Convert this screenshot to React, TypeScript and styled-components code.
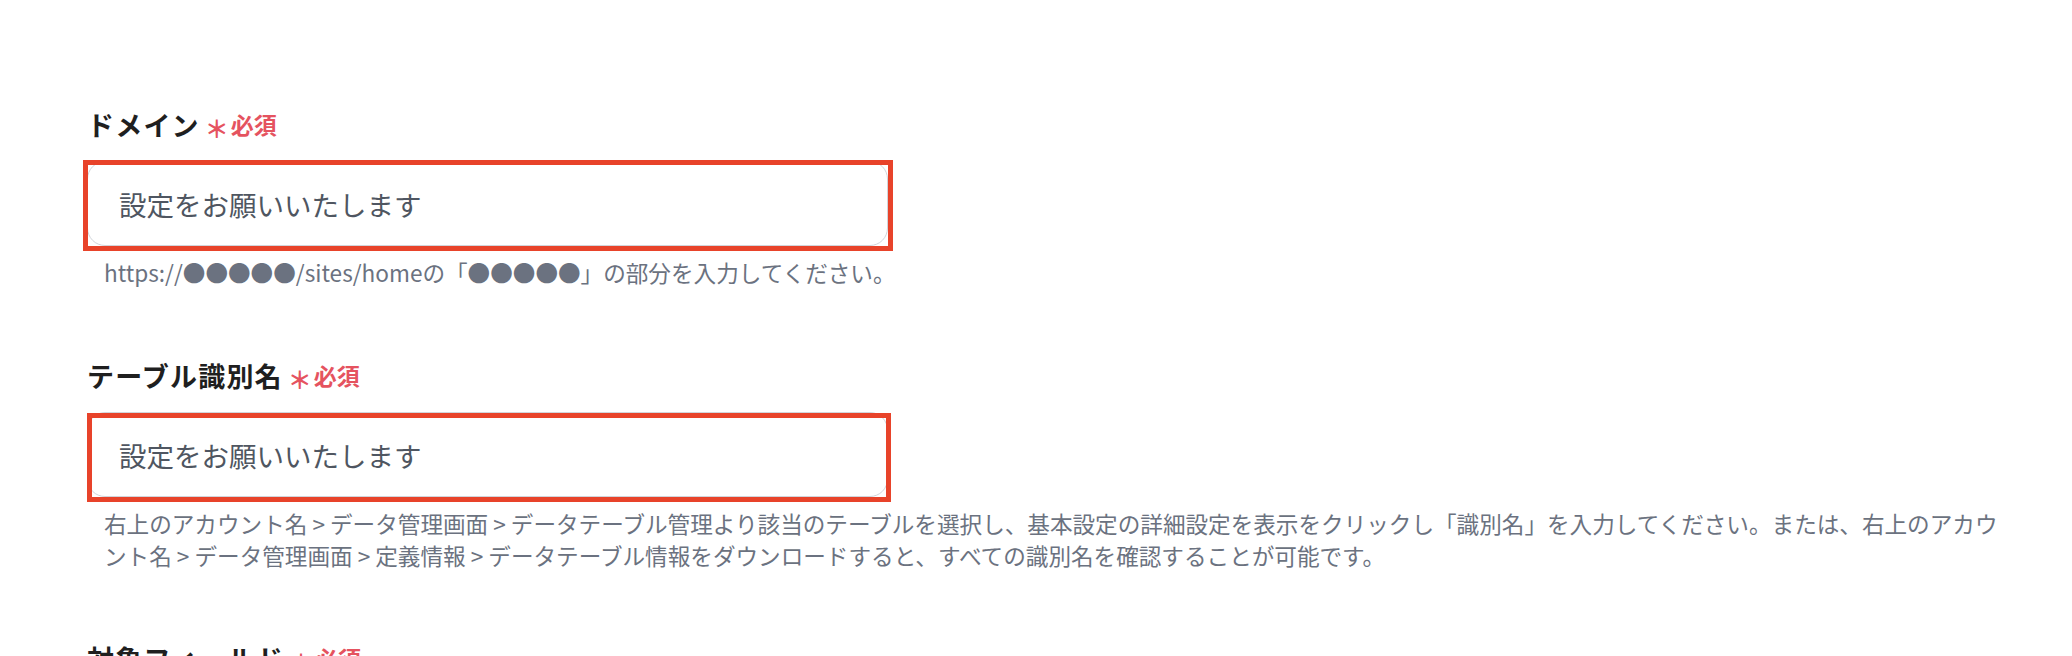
import styled, { createGlobalStyle } from "styled-components";

const GlobalStyle = createGlobalStyle`
  html, body {
    margin: 0;
    padding: 0;
    background: #ffffff;
  }
  body {
    font-family: "Noto Sans CJK JP", "Noto Sans", sans-serif;
    color: #1f1f1f;
  }
`;

interface IFrame {
  top: number;
  right: number;
  bottom: number;
  left: number;
}

interface IField {
  label: string;
  hint?: string;
  frame?: IFrame;
}

const fields: IField[] = [
  {
    label: "ドメイン",
    hint: "https://●●●●●/sites/homeの「●●●●●」の部分を入力してください。",
    frame: { top: -1, right: -5, bottom: -5, left: -4 },
  },
  {
    label: "テーブル識別名",
    hint:
      "右上のアカウント名 > データ管理画面 > データテーブル管理より該当のテーブルを選択し、基本設定の詳細設定を表示をクリックし「識別名」を入力してください。または、右上のアカウント名 > データ管理画面 > 定義情報 > データテーブル情報をダウンロードすると、すべての識別名を確認することが可能です。",
    frame: { top: 1, right: -3, bottom: -5, left: 0 },
  },
  {
    label: "対象フィールド",
  },
];

const FormField = ({ label, hint, frame }: IField) => {
  return (
    <Field>
      <Label>
        {label}
        <Star>＊</Star>
        <Required>必須</Required>
      </Label>
      <InputWrap>
        <Input type="text" placeholder="設定をお願いいたします" />
        {frame ? <Highlight {...frame} /> : null}
      </InputWrap>
      {hint ? <Hint>{hint}</Hint> : null}
    </Field>
  );
};

export default function App() {
  return (
    <>
      <GlobalStyle />
      <Page>
        {fields.map((f) => (
          <FormField key={f.label} {...f} />
        ))}
      </Page>
    </>
  );
}

const Page = styled.div`
  padding: 106px 72px 0 87px;
  display: flex;
  flex-direction: column;
`;

const Field = styled.div`
  display: flex;
  flex-direction: column;
  margin-bottom: 68px;
`;

const Label = styled.div`
  display: flex;
  align-items: center;
  height: 36px;
  font-size: 27px;
  font-weight: 700;
  color: #1f1f1f;
  letter-spacing: 1.2px;
`;

const Star = styled.span`
  margin-left: 5px;
  font-size: 24px;
  font-weight: 700;
  color: #e5535f;
  position: relative;
  top: 3px;
  letter-spacing: 0;
`;

const Required = styled.span`
  margin-left: 2px;
  font-size: 23px;
  font-weight: 700;
  color: #e5535f;
  letter-spacing: 0;
`;

const InputWrap = styled.div`
  position: relative;
  width: 801px;
  margin-top: 19px;
`;

const Input = styled.input`
  box-sizing: border-box;
  display: block;
  width: 100%;
  height: 85px;
  margin: 0;
  padding: 0 0 0 31px;
  border: 1px solid #d1d5db;
  border-radius: 18px;
  background: #ffffff;
  font-family: "Noto Sans CJK JP", "Noto Sans", sans-serif;
  font-size: 27.5px;
  color: #374151;
  outline: none;

  &::placeholder {
    color: #4f5661;
  }
`;

const Highlight = styled.div<IFrame>`
  position: absolute;
  top: ${({ top }) => top}px;
  right: ${({ right }) => right}px;
  bottom: ${({ bottom }) => bottom}px;
  left: ${({ left }) => left}px;
  border: 5px solid #e8432a;
  pointer-events: none;
`;

const Hint = styled.div`
  margin-top: 11px;
  padding-left: 17px;
  font-size: 22.6px;
  line-height: 32px;
  color: #6b7280;
`;
